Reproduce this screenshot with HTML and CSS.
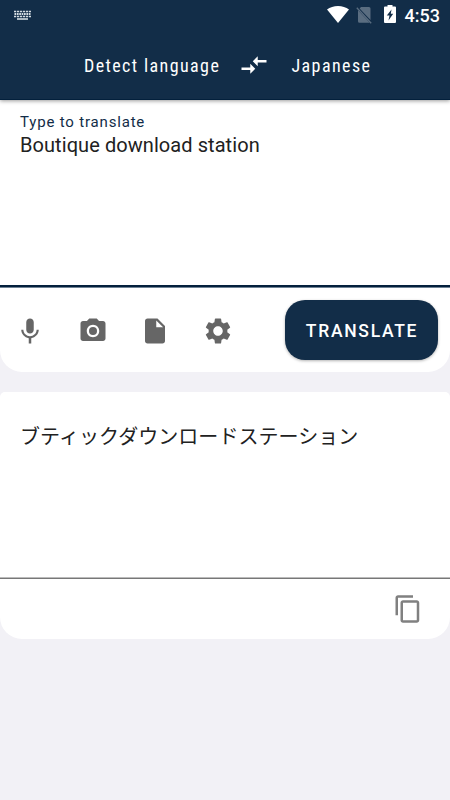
FILE: index.html
```
<!DOCTYPE html>
<html lang="en">
<head>
<meta charset="UTF-8">
<meta name="viewport" content="width=device-width, initial-scale=1.0">
<title>Translate</title>
<link rel="stylesheet" href="styles.css">
</head>
<body>
  <header class="app-bar">
    <div class="status">
      <svg class="keyboard" viewBox="0 0 17 10">
        <path d="M0 1.500h17M0 6.500h17" stroke-width="1.600" stroke-dasharray="2.200 .76"/>
        <path d="M.5 4h16" stroke-width="1.800" stroke-dasharray="1.700 .68"/>
        <path d="M3 9h11" stroke-width="1.600"/>
      </svg>
      <div class="status-right">
        <svg class="wifi" viewBox="0 0 22 17"><path d="M11 17L0 3.600C3 1.200 6.800 0 11 0s8 1.200 11 3.600z"/></svg>
        <svg class="no-sim" viewBox="0 0 16 18">
          <path class="dim" d="M5 1h8q1.500 0 1.500 1.500v11.600L3.600 2.400zM2 4.200l11.800 12.500H3.500Q2 16.700 2 15.200z"/>
          <path class="slash" d="M.8 1.800l14.400 15.400"/>
        </svg>
        <svg class="battery" viewBox="0 0 12 18"><path fill-rule="evenodd" d="M3.500 0h5v1.500H11q1 0 1 1V17q0 1-1 1H1q-1 0-1-1V2.500q0-1 1-1h2.500zM7.500 4.500L2.800 10.500h2.700L4.500 15.500L9.200 8.800H6.800z"/></svg>
        <span class="time">4:53</span>
      </div>
    </div>
    <nav class="languages">
      <span class="lang from">Detect language</span>
      <svg class="swap" viewBox="0 0 24 24"><path d="M9.010 14H2v2h7.010v3L13 15l-3.990-4v3zm5.980-1v-3H22V8h-7.010V5L11 9l3.990 4z"/></svg>
      <span class="lang to">Japanese</span>
    </nav>
  </header>

  <main>
    <section class="card source">
      <div class="field">
        <label>Type to translate</label>
        <p>Boutique download station</p>
      </div>
      <div class="tools">
        <div class="icons">
          <svg viewBox="0 0 24 24"><path d="M12 14c1.660 0 2.990-1.340 2.990-3L15 5c0-1.660-1.340-3-3-3S9 3.340 9 5v6c0 1.660 1.340 3 3 3zm5.300-3c0 3-2.540 5.100-5.300 5.100S6.700 14 6.700 11H5c0 3.410 2.720 6.230 6 6.720V22h2v-4.280c3.280-.48 6-3.300 6-6.720h-1.700z"/></svg>
          <svg viewBox="0 0 24 24"><circle cx="12" cy="12" r="3.200"/><path d="M9 2L7.170 4H4c-1.100 0-2 .9-2 2v12c0 1.100.9 2 2 2h16c1.100 0 2-.9 2-2V6c0-1.100-.9-2-2-2h-3.170L15 2H9zm3 15c-2.760 0-5-2.240-5-5s2.240-5 5-5 5 2.240 5 5-2.240 5-5 5z"/></svg>
          <svg viewBox="0 0 24 24"><path d="M6 2c-1.100 0-1.990.9-1.990 2L4 20c0 1.100.89 2 1.990 2H18c1.100 0 2-.9 2-2V8l-6-6H6zm7 7V3.500L18.500 9H13z"/></svg>
          <svg viewBox="0 0 24 24"><path d="M19.430 12.980c.04-.32.070-.64.070-.98s-.03-.66-.07-.98l2.110-1.650c.19-.15.240-.42.120-.64l-2-3.460c-.12-.22-.39-.3-.61-.22l-2.490 1c-.52-.4-1.080-.73-1.690-.98l-.38-2.650C14.460 2.180 14.250 2 14 2h-4c-.25 0-.46.180-.49.420l-.38 2.650c-.61.250-1.170.590-1.690.98l-2.490-1c-.23-.09-.49 0-.61.220l-2 3.460c-.13.220-.07.490.12.640l2.110 1.650c-.04.320-.07.650-.07.980s.03.660.070.980l-2.110 1.650c-.19.150-.24.420-.12.640l2 3.460c.12.220.39.300.61.220l2.490-1c.52.400 1.080.730 1.690.980l.38 2.650c.03.240.24.420.49.420h4c.25 0 .46-.18.490-.42l.38-2.650c.61-.25 1.170-.59 1.690-.98l2.490 1c.23.090.49 0 .61-.22l2-3.460c.12-.22.070-.49-.12-.64l-2.110-1.650zM12 15.800c-2.100 0-3.800-1.700-3.800-3.800s1.700-3.800 3.800-3.800 3.800 1.700 3.800 3.800-1.700 3.800-3.800 3.800z"/></svg>
        </div>
        <button>TRANSLATE</button>
      </div>
    </section>

    <section class="card result">
      <p class="output" lang="ja">ブティックダウンロードステーション</p>
      <div class="actions">
        <svg viewBox="0 0 24 24"><path d="M16 1H4c-1.100 0-2 .9-2 2v14h2V3h12V1zm3 4H8c-1.100 0-2 .9-2 2v14c0 1.100.9 2 2 2h11c1.100 0 2-.9 2-2V7c0-1.100-.9-2-2-2zm0 16H8V7h11v14z"/></svg>
      </div>
    </section>
  </main>
</body>
</html>
```

FILE: styles.css
```
* { margin:0; padding:0; box-sizing:border-box; }
body { font-family: Roboto, "Noto Sans CJK JP", sans-serif; background:#f2f1f6; color:#212121; min-height:100vh; }
svg { display:block; flex-shrink:0; }

.app-bar { position:relative; height:100px; background:#122d48; color:#fff; border-bottom:1px solid #03203c; box-shadow:0 1px 4px rgba(0,0,0,.4); }
.status { display:flex; justify-content:space-between; height:30px; padding:0 10px 0 14px; }
.keyboard { width:17px; height:10px; margin-top:10px; fill:none; stroke:#d5dde3; }
.status-right { display:flex; align-items:flex-start; padding-top:5px; fill:#fff; }
.wifi { width:22px; height:17px; margin-top:1px; }
.no-sim { width:16px; height:18px; margin:1px 0 0 7px; }
.dim { fill:#5a6d80; }
.slash { stroke:#5a6d80; stroke-width:1.3; }
.battery { width:12px; height:18px; margin-left:12px; }
.time { font-size:18px; line-height:22px; font-weight:500; margin-left:9px; }

.languages { display:flex; align-items:center; height:70px; padding-left:84px; }
.lang { font-family:"Roboto Condensed", Roboto, sans-serif; font-stretch:75%; font-size:18px; letter-spacing:1.4px; white-space:nowrap; }
.from { width:155px; }
.swap { width:30px; height:30px; fill:#fff; }
.to { margin-left:22.5px; }

.card { background:#fff; }
.source { height:272px; border-radius:0 0 22px 22px; }
.field { height:187px; padding:12px 20px 0; border-bottom:2px solid #03203c; box-shadow:0 1px 0 #6f8294; }
.field label { display:block; font-size:15px; line-height:20px; letter-spacing:.82px; color:#122d48; }
.field p { font-size:20px; line-height:26px; letter-spacing:.07px; }
.tools { display:flex; justify-content:space-between; align-items:center; height:86px; padding:0 12.5px 0 15px; }
.icons { display:flex; gap:32.5px; padding-top:1px; fill:#666; }
.icons svg { width:30px; height:30px; }
button { width:153px; height:60px; padding:2px 0 0 2px; border:none; border-radius:20px; background:#122d48; color:#fff; font:500 17.5px Roboto, sans-serif; letter-spacing:1.7px; box-shadow:0 1px 3px rgba(0,0,0,.3); }

.result { height:247px; margin-top:20px; border-radius:5px 5px 22px 22px; }
.output { height:187px; padding:30px 20px 0; font-size:20px; line-height:30px; letter-spacing:.04px; border-bottom:1px solid #777; box-shadow:inset 0 -1px 0 #bbb; }
.actions { display:flex; justify-content:flex-end; align-items:center; height:60px; padding-right:27.5px; fill:#808080; }
.actions svg { width:30px; height:30px; }
```
